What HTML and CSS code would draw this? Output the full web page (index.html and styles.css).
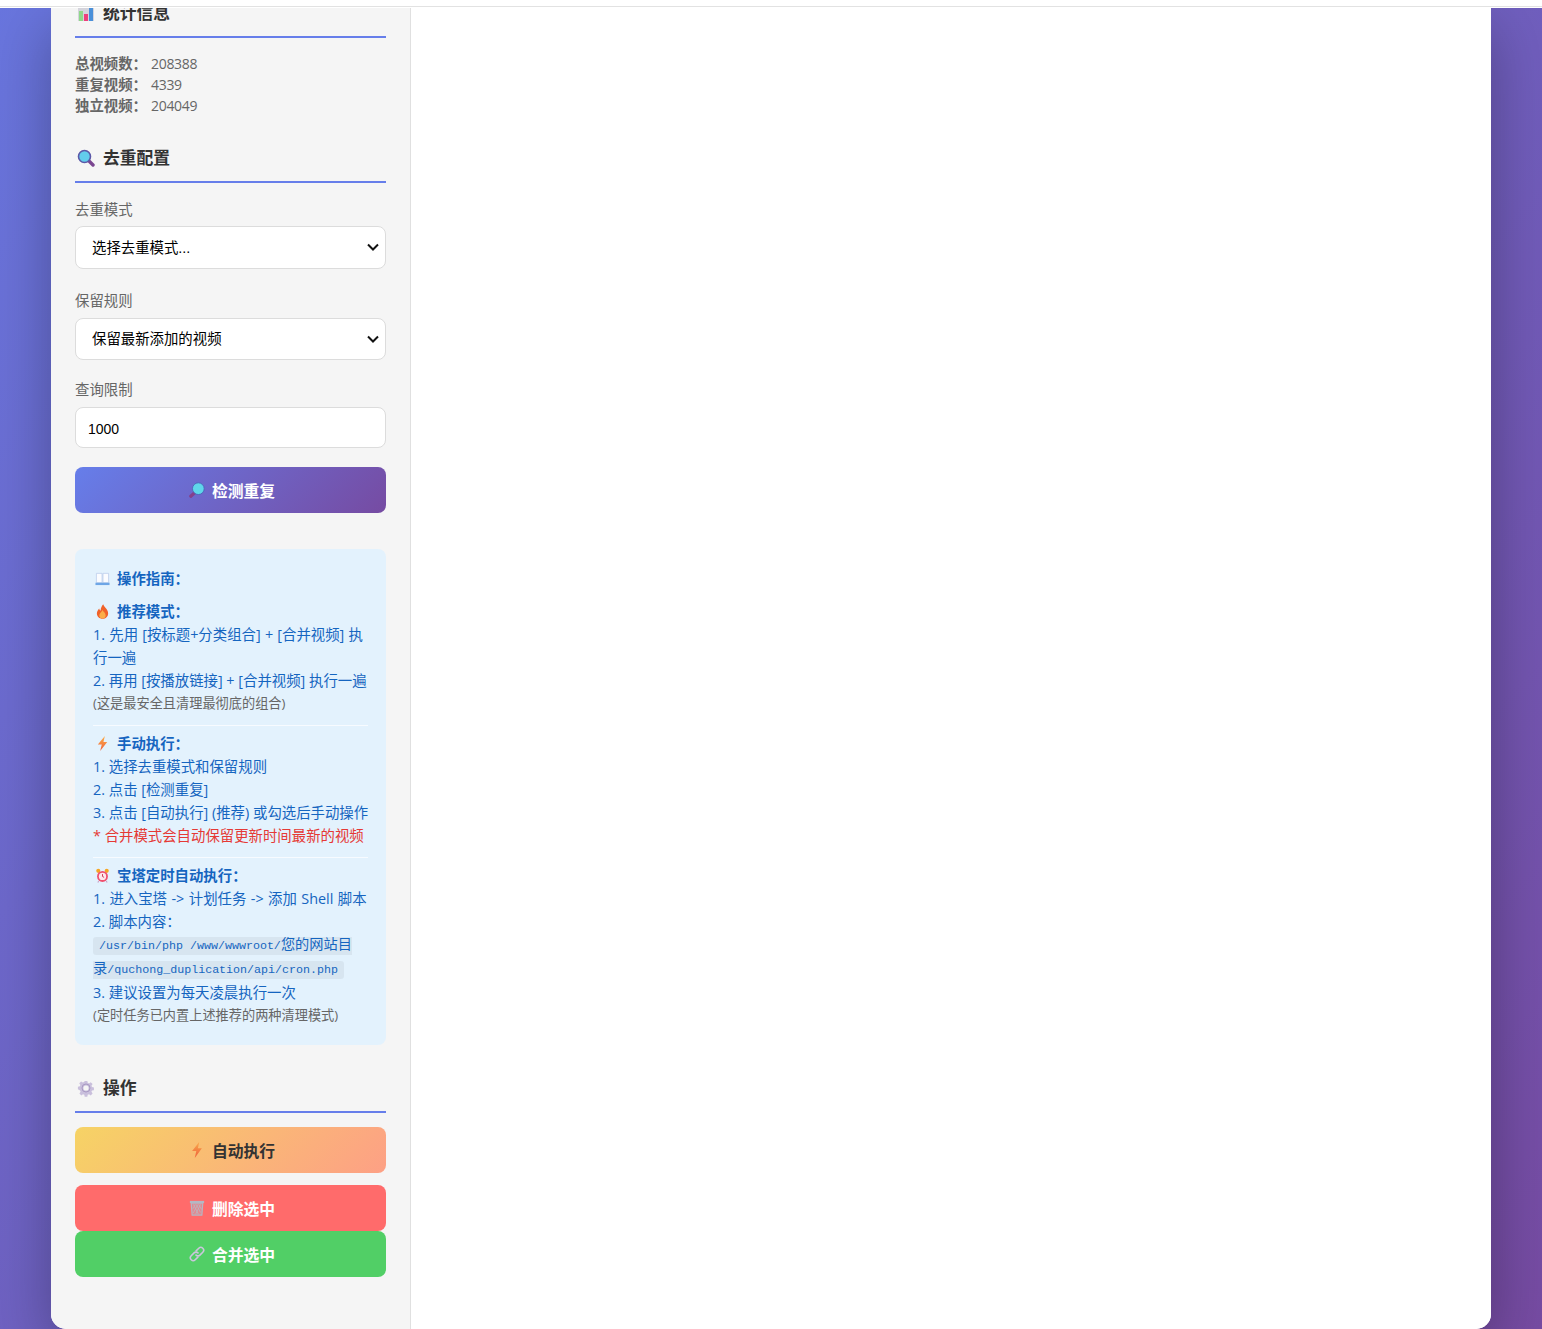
FILE: index.html
```html
<!DOCTYPE html>
<html lang="zh-CN">
<head>
<meta charset="utf-8">
<title>视频去重</title>
<link rel="stylesheet" href="styles.css">
</head>
<body>
<div class="topbar"></div>
<div class="page">
  <div class="container">
    <aside class="sidebar">
      <div class="sidebar-inner">
        <section class="section">
          <h2 class="title">
            <svg class="ticon" viewBox="0 0 18 18"><rect x="1" y="1" width="16" height="16" fill="#d4d4dc"/><rect x="2" y="7" width="4" height="10" fill="#8fd88a"/><rect x="7" y="10" width="4" height="7" fill="#ee3f7c"/><rect x="12" y="2" width="4" height="15" fill="#4a90d9"/></svg>
            <span>统计信息</span>
          </h2>
          <div class="stat"><strong>总视频数：</strong><span class="val">208388</span></div>
          <div class="stat"><strong>重复视频：</strong><span class="val">4339</span></div>
          <div class="stat"><strong>独立视频：</strong><span class="val">204049</span></div>
        </section>

        <section class="section">
          <h2 class="title">
            <svg class="ticon" viewBox="0 0 18 18"><path d="M11.500 11.500l4.500 4.500" stroke="#7a4590" stroke-width="3.400" stroke-linecap="round"/><circle cx="7.500" cy="7.500" r="6" fill="#62cdec" stroke="#5b58a8" stroke-width="1.600"/></svg>
            <span>去重配置</span>
          </h2>
          <div class="group">
            <label class="label">去重模式</label>
            <select class="field field-select"><option>选择去重模式...</option></select>
          </div>
          <div class="group group-tight">
            <label class="label">保留规则</label>
            <select class="field field-select"><option>保留最新添加的视频</option></select>
          </div>
          <div class="group group-last">
            <label class="label">查询限制</label>
            <input class="field field-input" type="text" value="1000">
          </div>
          <button class="btn btn-primary">
            <svg class="bicon" viewBox="0 0 18 18"><path d="M7 11.500l-5 4.500" stroke="#84408c" stroke-width="3.600" stroke-linecap="round"/><circle cx="10.500" cy="7.500" r="6.600" fill="#5fd6ea" stroke="#4a66b8" stroke-width="1"/></svg>
            <span>检测重复</span>
          </button>
        </section>

        <section class="guide">
          <div class="guide-head first">
            <svg class="gicon" viewBox="0 0 16 16"><path d="M1.500 2.500h6v10h-6z" fill="#fbfcff" stroke="#b9cbea" stroke-width=".8"/><path d="M8.500 2.500h6v10h-6z" fill="#fbfcff" stroke="#b9cbea" stroke-width=".8"/><path d="M.5 12.500h15V15H.5z" fill="#6ea6e6"/></svg>
            <span>操作指南：</span>
          </div>
          <div class="guide-head">
            <svg class="gicon" viewBox="0 0 16 16"><path d="M8.800.3c.6 3.200 5.200 5 5.200 9.800 0 3.300-2.600 5.700-6 5.700s-6-2.400-6-5.600c0-2.500 1.300-3.900 2.500-5.400.2 1.200.7 2 1.500 2.300C6 4.600 7.200 2 8.800.3z" fill="#f0622a"/><path d="M8 6.500c.6 1.800 3.400 2.900 3.400 5.700 0 2-1.500 3.300-3.400 3.300s-3.400-1.300-3.400-3.200C4.600 9.900 7 8.700 8 6.500z" fill="#fbae48"/></svg>
            <span>推荐模式：</span>
          </div>
          <p class="line wide-s">1. 先用 [按标题+分类组合] + [合并视频] 执行一遍</p>
          <p class="line nowrap">2. 再用 [按播放链接] + [合并视频] 执行一遍</p>
          <p class="line small">(这是最安全且清理最彻底的组合)</p>
          <hr class="rule">
          <div class="guide-head">
            <svg class="gicon" viewBox="0 0 16 16"><defs><linearGradient id="bolt1" x1="0" y1="0" x2="0" y2="1"><stop offset="0" stop-color="#fbb04a"/><stop offset="1" stop-color="#f0603c"/></linearGradient></defs><path d="M10.500 0 3 9h4.200L5.500 16 13 6.500H9z" fill="url(#bolt1)"/></svg>
            <span>手动执行：</span>
          </div>
          <p class="line">1. 选择去重模式和保留规则</p>
          <p class="line">2. 点击 [检测重复]</p>
          <p class="line nowrap">3. 点击 [自动执行] (推荐) 或勾选后手动操作</p>
          <p class="line warn">* 合并模式会自动保留更新时间最新的视频</p>
          <hr class="rule">
          <div class="guide-head">
            <svg class="gicon" viewBox="0 0 16 16"><circle cx="3.500" cy="3" r="2.200" fill="#f6a623"/><circle cx="12.500" cy="3" r="2.200" fill="#f6a623"/><path d="M4 14l-1 1.500M12 14l1 1.500" stroke="#c8a0c8" stroke-width="1.200"/><circle cx="8" cy="9" r="5.800" fill="#f0506e"/><circle cx="8" cy="9" r="3.900" fill="#fde8ec"/><path d="M8 6.500V9l1.700 1" stroke="#c8324e" stroke-width="1" fill="none"/></svg>
            <span>宝塔定时自动执行：</span>
          </div>
          <p class="line wide">1. 进入宝塔 -&gt; 计划任务 -&gt; 添加 Shell 脚本</p>
          <p class="line">2. 脚本内容：</p>
          <p class="line line-code"><code class="code">/usr/bin/php /www/wwwroot/<span class="code-cjk">您的网站目录</span>/quchong_duplication/api/cron.php</code></p>
          <p class="line">3. 建议设置为每天凌晨执行一次</p>
          <p class="line small">(定时任务已内置上述推荐的两种清理模式)</p>
        </section>

        <section class="section actions">
          <h2 class="title">
            <svg class="ticon" viewBox="0 0 18 18"><path d="M7.500 1h3l.4 2.200 1.500.6 1.900-1.300 2.100 2.100-1.300 1.900.6 1.500 2.200.4v3l-2.200.4-.6 1.500 1.300 1.900-2.100 2.100-1.900-1.300-1.500.6-.4 2.200h-3l-.4-2.200-1.500-.6-1.900 1.300-2.100-2.100 1.300-1.900-.6-1.500L-.1 10.500v-3l2.200-.4.6-1.500L1.400 3.700l2.100-2.100 1.900 1.300 1.500-.6z" fill="#c9bfdc" transform="translate(1 1) scale(.89)"/><circle cx="9" cy="9" r="2.600" fill="#f5f5f5"/><circle cx="9" cy="9" r="4" fill="none" stroke="#a99ac4" stroke-width="1"/></svg>
            <span>操作</span>
          </h2>
          <button class="btn btn-auto">
            <svg class="bicon" viewBox="0 0 18 18"><defs><linearGradient id="bolt2" x1="0" y1="0" x2="0" y2="1"><stop offset="0" stop-color="#f9a94a"/><stop offset="1" stop-color="#ee5f3c"/></linearGradient></defs><path d="M11.500 0 3.500 10h4.700L6.500 18 14.500 7H10z" fill="url(#bolt2)"/></svg>
            <span>自动执行</span>
          </button>
          <button class="btn btn-delete">
            <svg class="bicon" viewBox="0 0 18 18"><path d="M1 1h16v2.500H1z" fill="#b4b8c4"/><path d="M2.500 3.500h13L14.500 17h-11z" fill="#e08a92" stroke="#b4b8c4" stroke-width="1.300"/><path d="M5 5l5.500 11M8 5l5 9M11 5l3 5.500M13 5 7.500 16M10 5 4.800 14.500M7 5 4.400 10" stroke="#b8bac4" stroke-width=".8" fill="none"/></svg>
            <span>删除选中</span>
          </button>
          <button class="btn btn-merge">
            <svg class="bicon" viewBox="0 0 18 18"><g fill="none" stroke="#cbc6dc" stroke-width="1.800" stroke-linecap="round"><path d="M8 5.500l3-3a3.100 3.100 0 0 1 4.500 4.500l-3.200 3.200a3.100 3.100 0 0 1-4.400 0"/><path d="M10 12.500l-3 3A3.100 3.100 0 0 1 2.500 11l3.200-3.200a3.100 3.100 0 0 1 4.400 0"/></g></svg>
            <span>合并选中</span>
          </button>
        </section>
      </div>
    </aside>
    <main class="main"></main>
  </div>
</div>
</body>
</html>
```

FILE: styles.css
```css
* { box-sizing: border-box; }
html, body { margin: 0; padding: 0; height: 1329px; overflow: hidden; }
body {
  font-family: "Open Sans", "Noto Sans CJK SC", sans-serif;
  font-size: 14.4px;
  background: #fff;
}
.topbar {
  position: relative;
  z-index: 2;
  height: 8px;
  background: #fff;
  border-top: 6px solid #fff;
  box-shadow: inset 0 1px 0 #e2e2e2;
}
.page {
  height: 1321px;
  padding: 0 51px;
  overflow: hidden;
  background: linear-gradient(135deg, #667eea 0%, #764ba2 100%) bottom / 100% 1900px no-repeat;
}
.container {
  display: flex;
  height: 1321px;
  background: #fff;
  border-radius: 0 0 15px 15px;
  overflow: hidden;
  box-shadow: 0 20px 60px rgba(0, 0, 0, .3);
}
.sidebar {
  width: 360px;
  flex: none;
  background: #f5f5f5;
  border-right: 1px solid #e0e0e0;
  overflow: hidden;
}
.sidebar-inner { margin-top: -7px; padding: 0 24px; }
.main { flex: 1; background: #fff; }

.section { margin-bottom: 36px; }
.section:first-child { margin-bottom: 30px; }
.title {
  display: flex;
  align-items: center;
  gap: 8px;
  margin: 0 0 15px;
  padding: 0 0 12px 2px;
  border-bottom: 2px solid #667eea;
  font-size: 16.8px;
  line-height: 23px;
  font-weight: 700;
  color: #333;
}
.ticon { width: 18px; height: 18px; flex: none; }

.stat { font-size: 14.4px; line-height: 21px; color: #666; display: flex; }
.stat:first-of-type { margin-top: 15px; }
.stat strong { width: 76px; font-weight: 700; white-space: nowrap; }
.val { font-size: 14px; letter-spacing: -.3px; }

.group { margin-bottom: 20px; }
.group-tight { margin-bottom: 18px; }
.group-last { margin-bottom: 19.500px; }
.label {
  display: block;
  margin-bottom: 5px;
  font-size: 14.4px;
  line-height: 23px;
  color: #666;
}
.group + .group .label { margin-bottom: 6px; }
.field {
  display: block;
  width: 100%;
  border: 1px solid #dcdcdc;
  border-radius: 8px;
  background-color: #fff;
  color: #000;
  font-family: "Liberation Sans", "Noto Sans CJK SC", sans-serif;
  font-size: 14.4px;
}
.field-select {
  height: 42.500px;
  padding: 1px 30px 0 16px;
  appearance: none;
  -webkit-appearance: none;
  background-image: url("data:image/svg+xml,%3Csvg xmlns='http://www.w3.org/2000/svg' width='12' height='8' viewBox='0 0 12 8'%3E%3Cpath d='M1 1.500l5 5 5-5' fill='none' stroke='%23111' stroke-width='2'/%3E%3C/svg%3E");
  background-repeat: no-repeat;
  background-position: right 6px center;
  background-size: 12px 8px;
}
.field-input { height: 40.500px; padding: 3px 12px 0; font-size: 14px; }
.btn {
  display: flex;
  align-items: center;
  justify-content: center;
  gap: 7px;
  width: 100%;
  height: 46px;
  padding: 0 0 0 3px;
  border: 0;
  border-radius: 8px;
  font-family: inherit;
  font-size: 15.800px;
  font-weight: 700;
  color: #fff;
}
.bicon { width: 16px; height: 16px; flex: none; }
.btn-primary { background: linear-gradient(135deg, #667eea 0%, #764ba2 100%); }
.btn-auto { background: linear-gradient(135deg, #f6d365 0%, #fda085 100%); color: #333; margin-bottom: 12px; }
.btn-delete { background: #ff6b6b; }
.btn-merge { background: #51cf66; }

.guide {
  margin-bottom: 31px;
  padding: 18px 18px 18px;
  background: #e3f2fd;
  border-radius: 8px;
  color: #1565c0;
  font-size: 14.4px;
  line-height: 23px;
}
.guide-head {
  display: flex;
  align-items: center;
  gap: 7px;
  padding-left: 2px;
  font-weight: 700;
}
.guide-head.first { margin-bottom: 10px; }
.gicon { width: 15px; height: 15px; flex: none; }
.line { margin: 0; }
.nowrap { white-space: nowrap; }
.wide { word-spacing: .7px; }
.wide-s { word-spacing: .5px; }
.small { font-size: 13.200px; color: #666; }
.warn { color: #e53935; }
.rule { height: 1px; margin: 9.500px 0 6.500px; border: 0; background: rgba(255, 255, 255, .7); }
.line-code { line-height: 24px; }
.code {
  padding: 2px 6px;
  background: rgba(0, 0, 0, .05);
  border-radius: 3px;
  font-family: "Liberation Mono", "Noto Sans CJK SC", monospace;
  font-size: 11.670px;
  line-height: 1;
  vertical-align: 1.500px;
}
.code-cjk { font-size: 14.2px; line-height: 1; }
.actions { margin-bottom: 0; }
.actions .title { margin-bottom: 14px; }
```
